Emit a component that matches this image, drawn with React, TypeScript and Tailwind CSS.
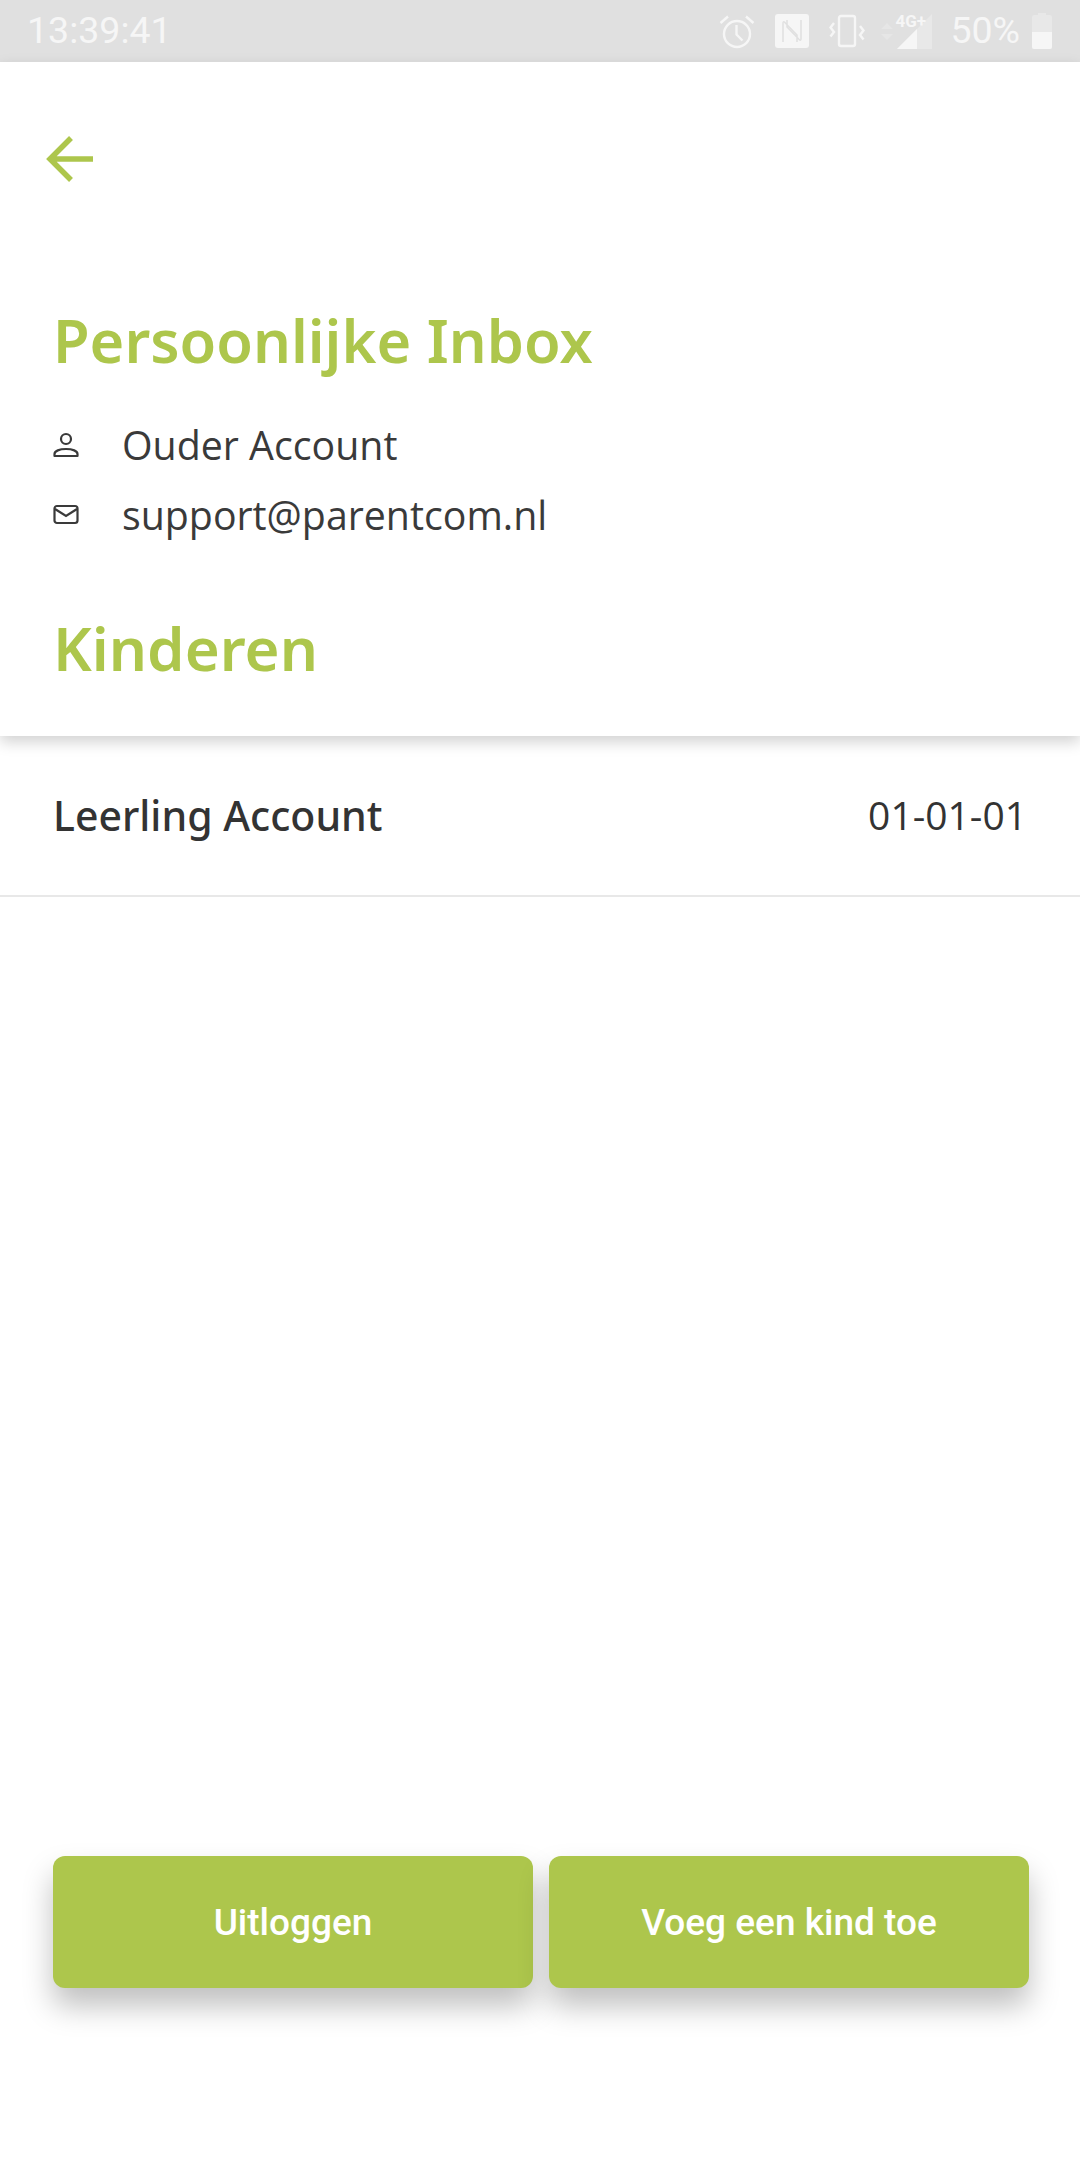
const green = "#adc64c";

const ArrowBack = () => (
  <svg width="64" height="64" viewBox="0 0 64 64" fill="none" stroke={green} strokeWidth="5.5">
    <path d="M55 32H14M33 11L12 32l21 21" />
  </svg>
);

const StatusIcons = () => (
  <div className="flex items-center text-[#f6f6f6]">
    <svg width="36" height="36" viewBox="0 0 36 36" fill="none" stroke="currentColor" strokeWidth="2.4">
      <circle cx="18" cy="21" r="13" />
      <path d="M17.5 12v9.5l6 6M1.5 10L9 3.5M34.5 10L27 3.5" />
    </svg>
    <svg width="34" height="34" viewBox="0 0 34 34" className="ml-[20px]">
      <rect width="34" height="34" rx="3" fill="currentColor" />
      <path d="M8 28V9c0-1 .8-1.600 1.600-.8L22 21v7M26 6v19c0 1-.8 1.600-1.600.8L12 13V6" fill="none" stroke="#e0e0e0" strokeWidth="1.500" />
    </svg>
    <svg width="36" height="34" viewBox="0 0 36 34" fill="none" stroke="currentColor" strokeWidth="2.4" className="ml-[20px]">
      <rect x="10" y="2" width="16" height="30" rx="2" />
      <path d="M5 9L1.500 13.500 5 18l-3.500 4.500M31 12l3.500 4.500L31 21l3.500 4.500" />
    </svg>
    <div className="relative ml-[15px] h-[36px] w-[52px]">
      <svg width="52" height="36" viewBox="0 0 52 36">
        <path d="M1 16l6-6 6 6zM1 21l6 6 6-6z" fill="currentColor" opacity="0.3" />
        <path d="M52 1v35H17z" fill="currentColor" opacity="0.35" />
        <path d="M37 16v20H17z" fill="currentColor" />
      </svg>
      <span className="absolute left-[15px] top-0 font-['Roboto',sans-serif] text-[17px] font-bold leading-[17px]">4G+</span>
    </div>
    <span className="ml-[18px] font-['Roboto',sans-serif] text-[37.500px] leading-none">50%</span>
    <svg width="20" height="36" viewBox="0 0 20 36" className="ml-[12px]">
      <path d="M6 0h8v2h4a2 2 0 0 1 2 2v30a2 2 0 0 1-2 2H2a2 2 0 0 1-2-2V4a2 2 0 0 1 2-2h4z" fill="currentColor" opacity="0.35" />
      <path d="M0 19h20v15a2 2 0 0 1-2 2H2a2 2 0 0 1-2-2z" fill="currentColor" />
    </svg>
  </div>
);

const PersonIcon = () => (
  <svg width="26" height="26" viewBox="0 0 26 26" fill="none" stroke="#3a3a3a" strokeWidth="2.2">
    <circle cx="13" cy="7" r="5" />
    <path d="M1.500 24v-2c0-3 5-5 11.500-5s11.500 2 11.500 5v2z" strokeLinejoin="round" />
  </svg>
);

const MailIcon = () => (
  <svg width="26" height="26" viewBox="0 0 26 26" fill="none" stroke="#3a3a3a" strokeWidth="2.2">
    <rect x="1.500" y="4" width="23" height="17" rx="2.500" />
    <path d="M2 7l11 7 11-7" />
  </svg>
);

export default function App() {
  return (
    <div className="flex h-[2160px] w-[1080px] flex-col bg-white">
      <div className="flex h-[62px] items-center justify-between bg-[#e0e0e0] pl-[27px] pr-[28px]">
        <span className="font-['Roboto',sans-serif] text-[37.500px] leading-none text-[#f6f6f6]">13:39:41</span>
        <StatusIcons />
      </div>

      <div className="relative z-10 h-[674px] bg-white pl-[53px] shadow-[0_6px_14px_rgba(0,0,0,0.18)]">
        <div className="-ml-[15px] pt-[65px]">
          <ArrowBack />
        </div>
        <h1 className="mt-[109px] font-['Noto_Sans',sans-serif] text-[59.500px] font-semibold leading-[80px] text-[#adc64c]">
          Persoonlijke Inbox
        </h1>
        <div className="mt-[30px] font-['Open_Sans',sans-serif] text-[39.300px] leading-[70px] text-[#3a3a3a]">
          <div className="flex items-center gap-[43px]">
            <PersonIcon />
            <span>Ouder Account</span>
          </div>
          <div className="flex items-center gap-[43px]">
            <MailIcon />
            <span>support@parentcom.nl</span>
          </div>
        </div>
        <h2 className="mt-[58px] font-['Noto_Sans',sans-serif] text-[60px] font-semibold leading-[80px] text-[#adc64c]">
          Kinderen
        </h2>
      </div>

      <div className="flex h-[161px] items-center justify-between border-b-2 border-[#e8e8e8] pl-[53px] pr-[53px] text-[#333333]">
        <span className="font-['Noto_Sans',sans-serif] text-[41px] font-medium">Leerling Account</span>
        <span className="font-['Open_Sans',sans-serif] text-[39px]">01-01-01</span>
      </div>

      <div className="mt-auto mb-[172px] flex gap-[16px] pl-[53px] pr-[51px]">
        <button className="h-[132px] flex-1 rounded-[12px] bg-[#adc64c] pt-[2px] font-['Roboto',sans-serif] text-[37px] font-medium text-white shadow-[0_18px_30px_rgba(0,0,0,0.25)]">
          Uitloggen
        </button>
        <button className="h-[132px] flex-1 rounded-[12px] bg-[#adc64c] pt-[2px] font-['Roboto',sans-serif] text-[37px] font-medium text-white shadow-[0_18px_30px_rgba(0,0,0,0.25)]">
          Voeg een kind toe
        </button>
      </div>
    </div>
  );
}
